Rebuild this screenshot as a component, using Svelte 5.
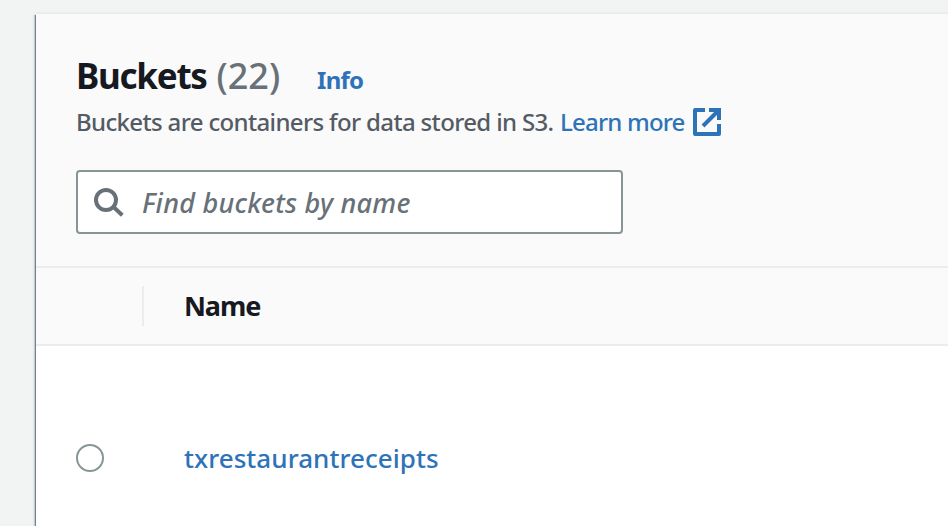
<script>
  const buckets = ['txrestaurantreceipts'];
  const total = 22;
</script>

<main>
  <section class="panel">
    <header>
      <div class="heading">
        <h1>Buckets <span>({total})</span></h1>
        <a class="info" href="#info">Info</a>
      </div>
      <p>
        <span class="desc">Buckets are containers for data stored in S3.</span>
        <a class="learn" href="#learn">Learn more</a>
        <svg width="28" height="28" viewBox="0 0 28 28" fill="none" stroke="#2e73b8" stroke-width="4">
          <path d="M12 2H2v24h24V16" stroke-linejoin="round" />
          <path d="M16 2h10v10M25 3L10 18" />
        </svg>
      </p>
      <div class="search">
        <svg width="30" height="30" viewBox="0 0 30 30" fill="none" stroke="#687078" stroke-width="4">
          <circle cx="12" cy="13" r="10" />
          <path d="M19 19.5l9.3 8.7" />
        </svg>
        <span class="hint">Find buckets by name</span>
      </div>
    </header>
    <div class="columns">
      <div class="select"></div>
      <div class="name">Name</div>
    </div>
    {#each buckets as bucket}
      <div class="row">
        <span class="radio"></span>
        <a class="bucket" href="#bucket">{bucket}</a>
      </div>
    {/each}
  </section>
</main>

<style>
  :global(body) { background: #f2f4f4; }
  main {
    box-sizing: border-box;
    width: 948px;
    height: 526px;
    padding: 12px 0 0 36px;
    overflow: hidden;
    background: #f2f4f4;
    font-family: "Noto Sans", "Open Sans", sans-serif;
    font-weight: 500;
    white-space: nowrap;
  }
  a { color: #2e73b8; text-decoration: none; }
  svg { display: block; flex: none; }
  .panel {
    box-sizing: border-box;
    height: 540px;
    background: #fff;
    border-top: 2px solid #eaeded;
    box-shadow: -1px 3px 1px #001c2470, -2px 3px 2px #001c2428;
  }
  header {
    box-sizing: border-box;
    height: 254px;
    padding: 38px 40px 0;
    background: #fafafa;
    border-bottom: 2px solid #eaeded;
  }
  .heading { display: flex; align-items: baseline; height: 48px; line-height: 48px; }
  h1 { margin: 0; width: 241px; color: #16191f; font-size: 35px; font-weight: 700; letter-spacing: -1.25px; }
  h1 span { margin-left: 2px; color: #687078; font-size: 36px; font-weight: 500; letter-spacing: 0; }
  .info { font-size: 24px; font-weight: 700; letter-spacing: -0.7px; }
  p { display: flex; align-items: center; height: 40px; margin: 2px 0 0; font-size: 24px; line-height: 32px; }
  .desc { width: 484px; color: #545b64; letter-spacing: -0.65px; }
  .learn { width: 133px; letter-spacing: -0.8px; }
  .search {
    box-sizing: border-box;
    display: flex;
    align-items: center;
    width: 547px;
    height: 64px;
    margin-top: 28px;
    padding-left: 16px;
    background: #fff;
    border: 2px solid #879596;
    border-radius: 4px;
  }
  .hint { margin-left: 18px; color: #687078; font-size: 27px; font-style: italic; letter-spacing: 0.25px; }
  .columns {
    box-sizing: border-box;
    display: flex;
    align-items: center;
    height: 78px;
    background: #fafafa;
    border-bottom: 2px solid #eaeded;
  }
  .select { box-sizing: border-box; width: 108px; height: 40px; border-right: 2px solid #eaeded; }
  .name { margin-left: 40px; padding-bottom: 2px; color: #16191f; font-size: 27px; font-weight: 700; letter-spacing: -1.1px; }
  .row { display: flex; align-items: center; height: 224px; padding-left: 40px; }
  .radio { box-sizing: border-box; width: 28px; height: 28px; border: 2px solid #879596; border-radius: 50%; }
  .bucket { margin-left: 80px; font-size: 26px; letter-spacing: 0.05px; }
</style>
